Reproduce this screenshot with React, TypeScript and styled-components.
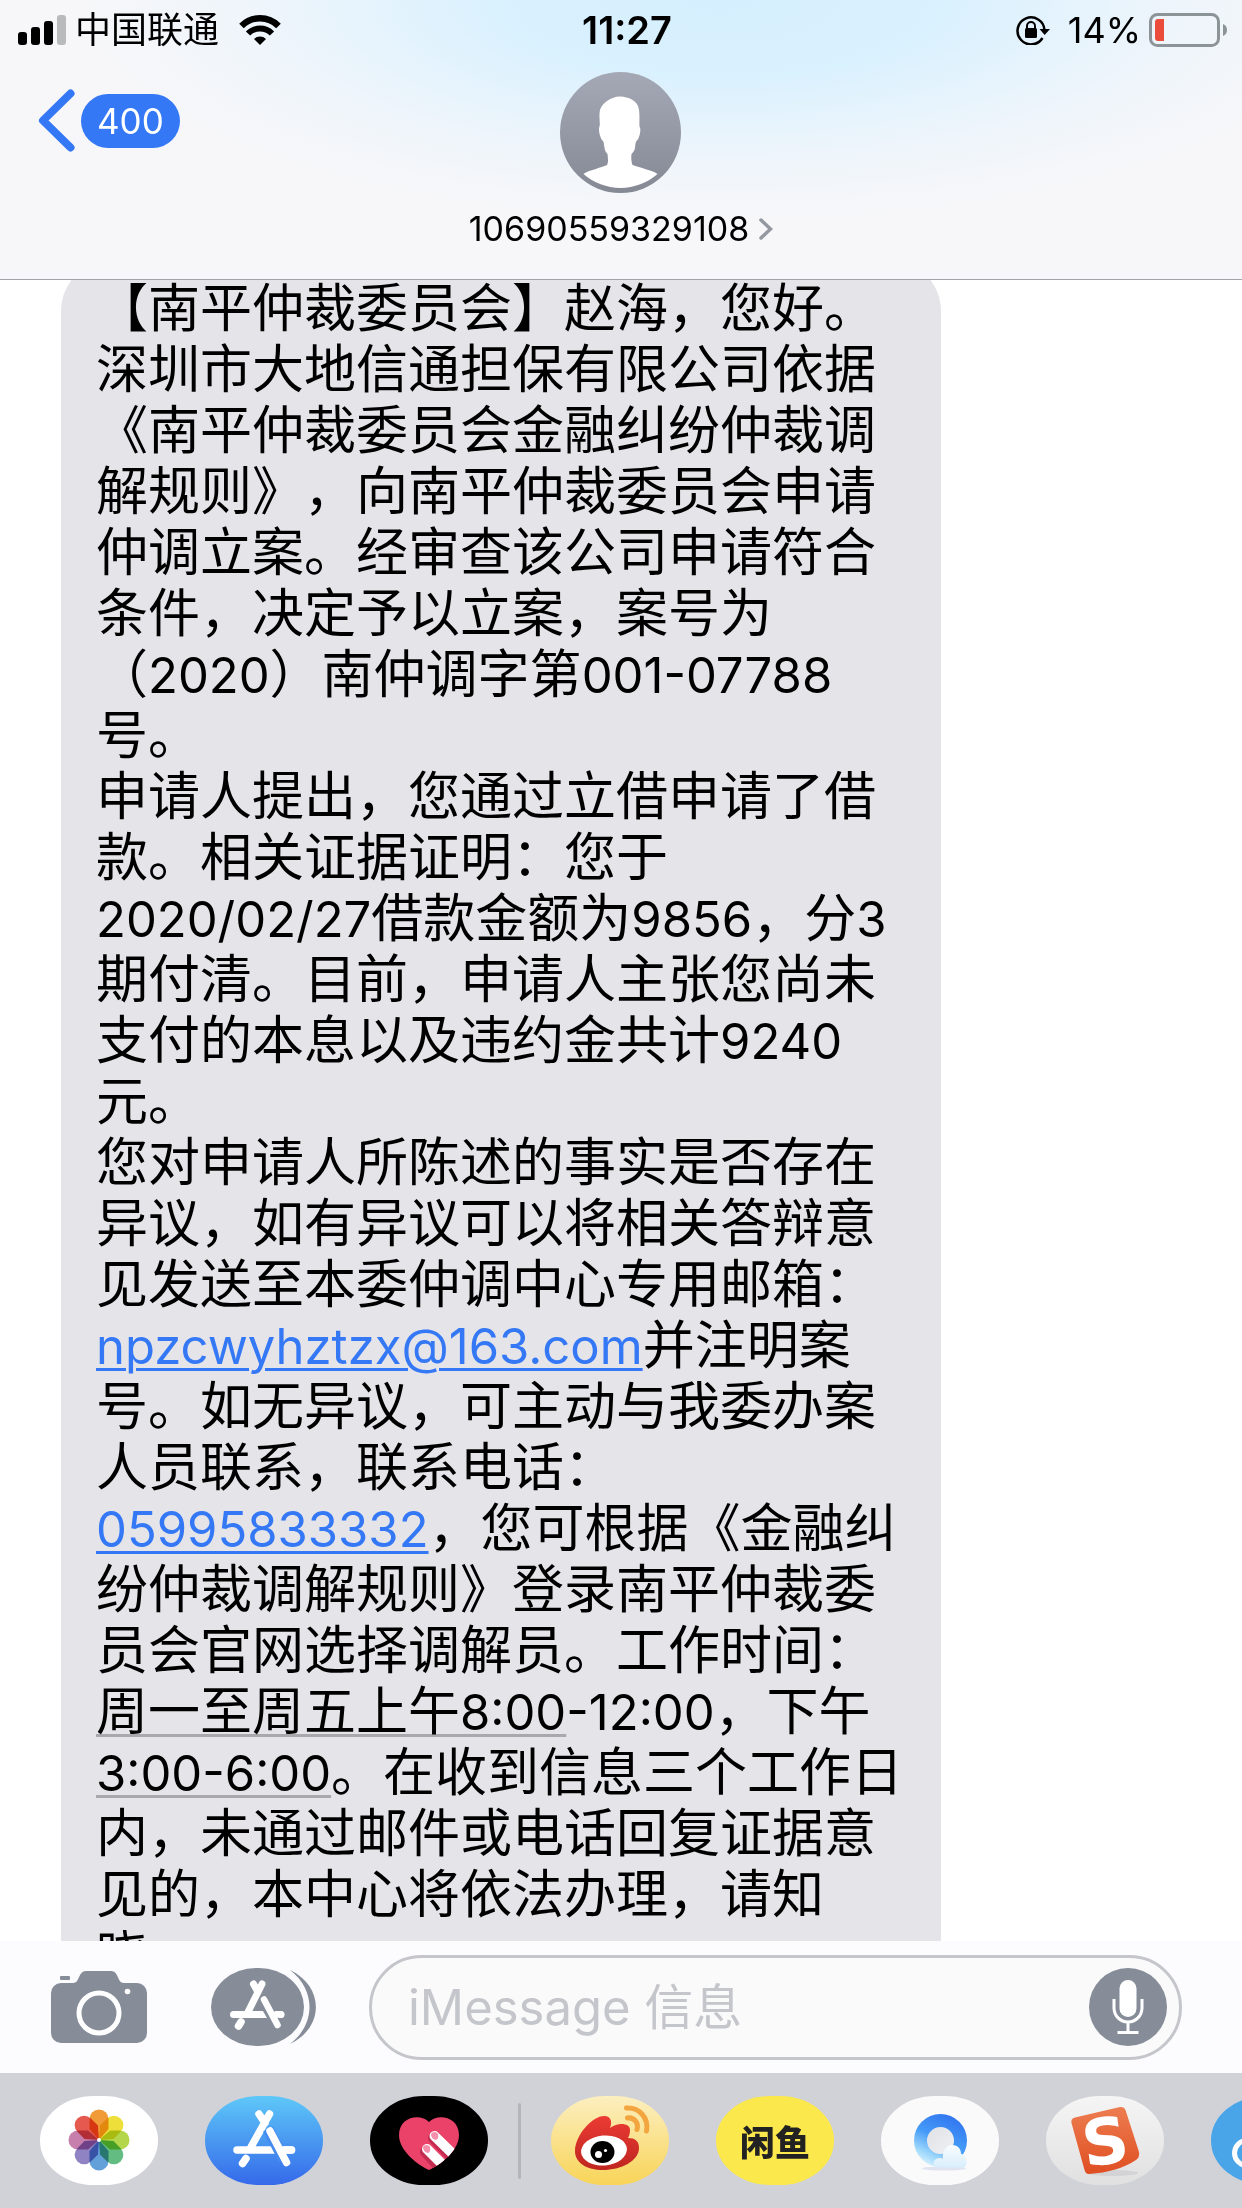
import React from "react";
import styled, { createGlobalStyle } from "styled-components";

const fontStack = `Inter, "Noto Sans CJK SC", sans-serif`;

const color = {
  link: "#3478f6",
  bubble: "#e5e4e9",
  icon: "#868d99",
  drawer: "#d1d2d8",
  border: "#c5c6cb",
};

const GlobalStyle = createGlobalStyle`
  *, *::before, *::after { box-sizing: border-box; }
  body {
    margin: 0;
    background: #fff;
    color: #000;
    font-family: ${fontStack};
  }
  button {
    padding: 0;
    border: 0;
    background: none;
    color: inherit;
    font: inherit;
    cursor: pointer;
  }
  svg { display: block; flex: none; }
`;

const Screen = styled.div`
  display: flex;
  flex-direction: column;
  height: 100vh;
  overflow: hidden;
`;

const Header = styled.header`
  flex: none;
  z-index: 1;
  border-bottom: 1px solid #a3a4a8;
  background:
    radial-gradient(ellipse 52% 80% at 58% 0, #d5effe 0, #daf1fe 35%, rgba(234, 244, 252, 0.7) 70%, rgba(247, 248, 250, 0) 100%),
    #f7f7f9;
`;

const StatusBar = styled.div`
  display: grid;
  grid-template-columns: 1fr auto 1fr;
  align-items: center;
  height: 60px;
  padding: 0 6px 0 18px;
  font-size: 36px;
  line-height: 60px;
`;

const StatusGroup = styled.div<{ $end?: boolean }>`
  display: flex;
  align-items: center;
  justify-content: ${(p) => (p.$end ? "flex-end" : "flex-start")};
  gap: 8px;
  padding-right: ${(p) => (p.$end ? "8px" : "0")};
`;

const Carrier = styled.span`
  margin-right: 12px;
`;

const Percent = styled.span`
  margin-left: 10px;
`;

const Clock = styled.time`
  font-size: 38px;
  font-weight: 600;
`;

const NavBar = styled.nav`
  display: grid;
  grid-template-columns: 1fr auto 1fr;
  align-items: start;
  height: 219px;
  padding: 12px 38px 0;
`;

const BackButton = styled.button`
  display: flex;
  align-items: center;
  justify-self: start;
  gap: 6px;
  margin-top: 17px;
`;

const UnreadPill = styled.span`
  padding: 0 16px;
  border-radius: 27px;
  background: ${color.link};
  color: #fff;
  font-size: 35px;
  line-height: 54px;
`;

const Contact = styled.button`
  display: flex;
  flex-direction: column;
  align-items: center;
  gap: 12px;
`;

const ContactName = styled.span`
  display: flex;
  align-items: center;
  gap: 10px;
  font-size: 34px;
  line-height: 48px;
`;

const Thread = styled.main`
  flex: 1;
  min-height: 0;
  overflow: hidden;
  padding: 0 61px;
`;

const Bubble = styled.article`
  width: 880px;
  max-width: 100%;
  margin-top: -20px;
  padding: 18px 34px 18px 35px;
  border-radius: 51px;
  background: ${color.bubble};
  font-size: 52px;
  line-height: 61px;
  text-spacing-trim: space-all;
`;

const Paragraph = styled.p`
  margin: 0;
`;

const Latin = styled.span`
  font-size: 49px;
  line-height: 49px;
`;

const MessageLink = styled.a`
  color: ${color.link};
  font-size: 49px;
  line-height: 49px;
  text-decoration: underline 3px;
  text-underline-offset: 4px;
`;

const DetectedTime = styled.span`
  text-decoration: underline 3px #a9a9ad;
  text-underline-offset: 4px;
`;

const Composer = styled.form`
  display: flex;
  flex: none;
  align-items: center;
  height: 132px;
  padding: 0 60px 0 51px;
  background: #fcfcfe;
`;

const CameraButton = styled.button`
  margin-right: 64px;
`;

const AppsButton = styled.button`
  margin-right: 53px;
`;

const InputPill = styled.div`
  display: flex;
  flex: 1;
  align-items: center;
  min-width: 0;
  height: 105px;
  padding: 0 12px 0 36px;
  border: 3px solid ${color.border};
  border-radius: 53px;
  background: #fafafa;
`;

const MessageInput = styled.input`
  flex: 1;
  min-width: 0;
  height: 80px;
  padding: 0;
  border: 0;
  outline: 0;
  background: none;
  font-family: ${fontStack};
  font-size: 49px;
  &::placeholder { color: #c5c6cb; opacity: 1; }
`;

const Drawer = styled.div`
  display: flex;
  flex: none;
  align-items: center;
  gap: 47px;
  height: 135px;
  overflow: hidden;
  padding: 0 0 0 40px;
  background: ${color.drawer};
`;

const AppIcon = styled.button<{ $bg: string }>`
  display: flex;
  flex: none;
  align-items: center;
  justify-content: center;
  width: 118px;
  height: 89px;
  overflow: hidden;
  border-radius: 54px / 44px;
  background: ${(p) => p.$bg};
`;

const Divider = styled.span`
  flex: none;
  width: 3px;
  height: 76px;
  margin: 0 -17px;
  border-radius: 2px;
  background: #b4b5ba;
`;

const Wordmark = styled.span`
  color: #222;
  font-family: "Noto Sans CJK SC", sans-serif;
  font-size: 35px;
  font-weight: 900;
  line-height: 40px;
`;

/* Sets runs of digits and Latin letters a step smaller than the Chinese text around them. */
const Mixed = ({ children }: { children: string }) => (
  <>
    {children.split(/([0-9A-Za-z:\/-]+)/).map((run, i) => (i % 2 ? <Latin key={i}>{run}</Latin> : run))}
  </>
);

const SignalIcon = () => (
  <svg width="49" height="30" viewBox="0 0 49 30" aria-hidden="true">
    <rect x="0" y="17" width="9" height="13" rx="3" />
    <rect x="13" y="12" width="9" height="18" rx="3" />
    <rect x="26" y="6" width="9" height="24" rx="3" />
    <rect x="39" y="0" width="9" height="30" rx="3" fill="#b9babb" />
  </svg>
);

const WifiIcon = () => (
  <svg width="42" height="30" viewBox="0 0 42 30" aria-hidden="true">
    <path d="M2.500 11 A26 26 0 0 1 39.500 11" fill="none" stroke="#000" strokeWidth="6.500" />
    <path d="M9 18.500 A17 17 0 0 1 33 18.500" fill="none" stroke="#000" strokeWidth="6" />
    <path d="M15 24 A8.500 8.500 0 0 1 27 24 L21 30 Z" />
  </svg>
);

const RotationLockIcon = () => (
  <svg width="34" height="30" viewBox="0 0 34 30" aria-hidden="true">
    <path d="M26.500 23 A13.500 13.500 0 1 1 28.500 15" fill="none" stroke="#000" strokeWidth="2.500" />
    <path d="M23.500 14 H34 L28.700 20 Z" />
    <rect x="9" y="13" width="12" height="10" rx="1.500" />
    <path d="M11 14 V11 a4 4 0 0 1 8 0 V14" fill="none" stroke="#000" strokeWidth="2" />
  </svg>
);

const BatteryIcon = () => (
  <svg width="79" height="34" viewBox="0 0 79 34" aria-hidden="true">
    <rect x="1.500" y="1.500" width="68" height="31" rx="7" fill="none" stroke="#8c9498" strokeWidth="3" />
    <path d="M9 6 H15 V28 H9 a3 3 0 0 1 -3 -3 V9 a3 3 0 0 1 3 -3 Z" fill="#eb4d3d" />
    <path d="M74 11 a6.500 6.500 0 0 1 0 12 Z" fill="#8c9498" />
  </svg>
);

const BackChevron = () => (
  <svg width="37" height="63" viewBox="0 0 37 63" aria-hidden="true">
    <path d="M32.500 4.500 L5 31.500 L32.500 58.500" fill="none" stroke={color.link} strokeWidth="8" strokeLinecap="round" strokeLinejoin="round" />
  </svg>
);

const AvatarIcon = () => (
  <svg width="121" height="121" viewBox="0 0 121 121" aria-hidden="true">
    <defs>
      <linearGradient id="avatarFill" x1="0" y1="0" x2="0" y2="1">
        <stop offset="0" stopColor="#a5a9b6" />
        <stop offset="1" stopColor="#858994" />
      </linearGradient>
    </defs>
    <circle cx="60.500" cy="60.500" r="60.500" fill="url(#avatarFill)" />
    <path
      fill="#fff"
      d="M60.500 24.500 C68 25 78 28 79 38 C80 45 79 50 79.500 54.500 C81.500 57 79.500 66 77 68.500 C76 69 75.500 71 75 76 C74.500 79 73 80 71.500 82 C71 87 71.500 90 72.500 93 C80 96 92 98 97.500 102 A56 56 0 0 1 23.500 102 C29 98 41 96 47 93 C48.500 90 48 87 47.500 82 C46 80 45 79 44.500 76 C44 71 43.500 69 42.500 68.500 C40 66 38 57 39.500 54.500 C40.500 50 38.500 45 40 38 C42 31 52 24 60.500 24.500 Z"
    />
  </svg>
);

const DetailChevron = () => (
  <svg width="14" height="24" viewBox="0 0 14 24" aria-hidden="true">
    <path d="M2 3 L11.500 12 L2 21" fill="none" stroke="#9498a0" strokeWidth="3.500" strokeLinecap="round" />
  </svg>
);

const CameraIcon = () => (
  <svg width="96" height="72" viewBox="0 0 96 72" aria-hidden="true" fill={color.icon}>
    <rect x="9" y="5" width="10" height="4" rx="1" />
    <path d="M10 12 H22 C29 12 27 0 35 0 H60 C68 0 66 12 73 12 H86 a10 10 0 0 1 10 10 V62 a10 10 0 0 1 -10 10 H10 a10 10 0 0 1 -10 -10 V22 a10 10 0 0 1 10 -10 Z" />
    <circle cx="48" cy="42" r="20" fill="none" stroke="#fff" strokeWidth="5" />
    <circle cx="76.500" cy="20.500" r="2.800" fill="#fff" />
  </svg>
);

const AppsIcon = () => (
  <svg width="105" height="78" viewBox="0 0 105 78" aria-hidden="true">
    <rect width="93" height="78" rx="45" ry="39" fill={color.icon} />
    <path d="M79 2 C113 18 114 59 79 76 C105 56 105 22 79 2 Z" fill={color.icon} />
    <g fill="none" strokeLinecap="round">
      <path d="M51 16 L36 46 M42.500 16 L47 24 M22.500 46.500 H70" stroke="#fff" strokeWidth="7" />
      <path d="M30 54 L27.500 58" stroke="#fff" strokeWidth="7.500" />
      <path d="M51 31 L66 57" stroke={color.icon} strokeWidth="10.500" strokeLinecap="butt" />
      <path d="M65 46.500 H70 M53 31.500 L66.500 57" stroke="#fff" strokeWidth="6.500" />
    </g>
  </svg>
);

const MicIcon = () => (
  <svg width="78" height="78" viewBox="0 0 78 78" aria-hidden="true">
    <circle cx="39" cy="39" r="39" fill={color.icon} />
    <rect x="30.500" y="12" width="17" height="37" rx="8.500" fill="#fff" />
    <path d="M25 31 V40 a14 14 0 0 0 28 0 V31 M39 54 V65 M28.500 64.500 H49.500" fill="none" stroke="#fff" strokeWidth="3" />
  </svg>
);

const petals = ["#f09b38", "#efdf3a", "#b4d64a", "#63bd83", "#63a0da", "#8f83c4", "#c77fae", "#e5594f"];

const PhotosIcon = () => (
  <svg width="118" height="89" viewBox="0 0 118 89" aria-hidden="true">
    {petals.map((fill, i) => (
      <path
        key={fill}
        d="M0 0 L-9.500 -11 V-21 a9.500 9.500 0 0 1 19 0 V-11 Z"
        fill={fill}
        transform={`translate(59 44) rotate(${i * 45})`}
        style={{ mixBlendMode: "multiply" }}
      />
    ))}
    <circle cx="59" cy="44" r="2" fill="#fff" />
  </svg>
);

const StoreIcon = () => (
  <svg width="118" height="89" viewBox="0 0 118 89" aria-hidden="true" fill="none" strokeLinecap="round">
    <path d="M64.500 18 L46 51 M54 18 L60 27 M32 54 H86.500" stroke="#fff" strokeWidth="7.500" />
    <path d="M41 62.500 L37.500 67.500" stroke="#fff" strokeWidth="7.500" />
    <path d="M63 33 L79 64" stroke="#458bef" strokeWidth="11" strokeLinecap="butt" />
    <path d="M79 54 H86.500 M65 35 L81.500 66.500" stroke="#fff" strokeWidth="7.500" />
  </svg>
);

const HeartIcon = () => (
  <svg width="118" height="89" viewBox="0 0 118 89" aria-hidden="true">
    <defs>
      <clipPath id="heartShape">
        <path d="M59 26 C67 17 89 20 89 39 C89 55 70 69 59 74 C48 69 29 55 29 39 C29 20 51 17 59 26 Z" />
      </clipPath>
    </defs>
    <g clipPath="url(#heartShape)">
      <rect x="25" y="15" width="70" height="62" fill="#eb426a" />
      <g strokeLinecap="round">
        <path d="M55 56 L75 78" stroke="#c22c50" strokeWidth="10" />
        <path d="M64 42 L90 68" stroke="#c22c50" strokeWidth="12" />
        <path d="M57 53 L80 76" stroke="#fff" strokeWidth="10" />
        <path d="M64.500 40 L92 67" stroke="#fff" strokeWidth="10" />
      </g>
      <path d="M53 51 a4 4 0 0 1 7 0 q1 5 -2 6 q-5 -1 -5 -6 Z M61 38 a4 4 0 0 1 7 0 q1 5 -2 6 q-5 -1 -5 -6 Z" fill="#f48fae" />
    </g>
  </svg>
);

const WeiboIcon = () => (
  <svg width="118" height="89" viewBox="0 0 118 89" aria-hidden="true">
    <defs>
      <linearGradient id="weiboRed" x1="0" y1="0" x2="0" y2="1">
        <stop offset="0" stopColor="#eb3b34" />
        <stop offset="1" stopColor="#bf2520" />
      </linearGradient>
    </defs>
    <path
      d="M24 55 C24 39 42 19 54 20 C61 21 61 27 59 32 C67 26 79 27 79 34 C79 38 78 40 77 42 C84 42 88 45 88 52 C88 65 70 74 52 74 C36 74 24 67 24 55 Z"
      fill="url(#weiboRed)"
    />
    <ellipse cx="53" cy="54.500" rx="23" ry="15" fill="#fff" transform="rotate(-5 53 54.500)" />
    <ellipse cx="51.500" cy="56" rx="12" ry="11" />
    <circle cx="47.500" cy="58.500" r="3.500" fill="#fff" />
    <circle cx="54.500" cy="54.500" r="1.600" fill="#fff" />
    <path d="M75.500 12 C88 11 98 22 95.500 35 M76.500 22 C83 21 88 27 86 33.500" fill="none" stroke="#f3a53f" strokeWidth="5" strokeLinecap="round" />
  </svg>
);

const BrowserIcon = () => (
  <svg width="118" height="89" viewBox="0 0 118 89" aria-hidden="true">
    <defs>
      <linearGradient id="ringFill" x1="0.750" y1="0.100" x2="0.300" y2="1">
        <stop offset="0" stopColor="#3379f0" />
        <stop offset="0.450" stopColor="#459bf8" />
        <stop offset="0.800" stopColor="#9fd8fb" />
        <stop offset="1" stopColor="#d9f1fd" />
      </linearGradient>
      <linearGradient id="coreFill" x1="0" y1="0" x2="1" y2="1">
        <stop offset="0" stopColor="#dcdee3" />
        <stop offset="1" stopColor="#f3f4f6" />
      </linearGradient>
      <linearGradient id="cloudFill" x1="0" y1="0" x2="0" y2="1">
        <stop offset="0" stopColor="#fafdff" />
        <stop offset="1" stopColor="#d8eefb" />
      </linearGradient>
    </defs>
    <ellipse cx="63" cy="72.500" rx="22" ry="2" fill="#dfe4f0" />
    <circle cx="59.500" cy="45" r="20" fill="url(#coreFill)" />
    <path fillRule="evenodd" d="M59.500 18 a26.500 26.500 0 1 1 0 53 a26.500 26.500 0 1 1 0 -53 Z M59.500 31 a13.500 13.500 0 1 0 0 27 a13.500 13.500 0 1 0 0 -27 Z" fill="url(#ringFill)" />
    <path d="M57 71.500 C50 70 52 62 59 62 C60 62 61 62 62 63 C61 54 66 49 71 49 C77 49 80 53 80 58 C87 59 87 71 83 71.500 Z" fill="url(#cloudFill)" />
  </svg>
);

const InputMethodIcon = () => (
  <svg width="118" height="89" viewBox="0 0 118 89" aria-hidden="true">
    <defs>
      <linearGradient id="tileFill" x1="0" y1="0" x2="0" y2="1">
        <stop offset="0" stopColor="#ed7d50" />
        <stop offset="1" stopColor="#df4f22" />
      </linearGradient>
    </defs>
    <ellipse cx="66" cy="77" rx="26" ry="3" fill="#d3d3d5" />
    <path d="M29 21.500 L74 11 Q78 10.500 79.500 14 L93 56 Q94 61 90 64 Q72 76 43 78 Q39.500 78 38.500 74 L25.500 27 Q24.500 22.500 29 21.500 Z" fill="url(#tileFill)" />
    <text x="59" y="68" fill="#fff" fontFamily="DejaVu Sans, sans-serif" fontSize="64" fontWeight="700" textAnchor="middle" transform="rotate(-8 59 45)">
      S
    </text>
  </svg>
);

const LinkAppIcon = () => (
  <svg width="118" height="89" viewBox="0 0 118 89" aria-hidden="true">
    <circle cx="36" cy="57" r="12.500" fill="none" stroke="#fff" strokeWidth="5" />
  </svg>
);

export default function App() {
  return (
    <>
      <GlobalStyle />
      <Screen>
        <Header>
          <StatusBar>
            <StatusGroup>
              <SignalIcon />
              <Carrier>中国联通</Carrier>
              <WifiIcon />
            </StatusGroup>
            <Clock>11:27</Clock>
            <StatusGroup $end>
              <RotationLockIcon />
              <Percent>14%</Percent>
              <BatteryIcon />
            </StatusGroup>
          </StatusBar>
          <NavBar>
            <BackButton type="button">
              <BackChevron />
              <UnreadPill>400</UnreadPill>
            </BackButton>
            <Contact type="button">
              <AvatarIcon />
              <ContactName>
                10690559329108
                <DetailChevron />
              </ContactName>
            </Contact>
          </NavBar>
        </Header>

        <Thread>
          <Bubble>
            <Paragraph>
              【南平仲裁委员会】赵海，您好。
              <br />
              <Mixed>深圳市大地信通担保有限公司依据《南平仲裁委员会金融纠纷仲裁调解规则》，向南平仲裁委员会申请仲调立案。经审查该公司申请符合条件，决定予以立案，案号为（2020）南仲调字第001-07788号。</Mixed>
            </Paragraph>
            <Paragraph>
              <Mixed>申请人提出，您通过立借申请了借款。相关证据证明：您于2020/02/27借款金额为9856，分3期付清。目前，申请人主张您尚未支付的本息以及违约金共计9240元。</Mixed>
            </Paragraph>
            <Paragraph>
              您对申请人所陈述的事实是否存在异议，如有异议可以将相关答辩意见发送至本委仲调中心专用邮箱：
              <MessageLink href="mailto:npzcwyhztzx@163.com">npzcwyhztzx@163.com</MessageLink>
              并注明案号。如无异议，可主动与我委办案人员联系，联系电话：
              <MessageLink href="tel:05995833332">05995833332</MessageLink>
              ，您可根据《金融纠纷仲裁调解规则》登录南平仲裁委员会官网选择调解员。工作时间：
              <DetectedTime>
                <Mixed>周一至周五上午8:00</Mixed>
              </DetectedTime>
              <Mixed>-12:00，下午</Mixed>
              <DetectedTime>
                <Mixed>3:00-6:00</Mixed>
              </DetectedTime>
              。在收到信息三个工作日内，未通过邮件或电话回复证据意见的，本中心将依法办理，请知晓。
            </Paragraph>
          </Bubble>
        </Thread>

        <Composer onSubmit={(e) => e.preventDefault()}>
          <CameraButton type="button" aria-label="相机">
            <CameraIcon />
          </CameraButton>
          <AppsButton type="button" aria-label="App">
            <AppsIcon />
          </AppsButton>
          <InputPill>
            <MessageInput type="text" aria-label="信息" placeholder="iMessage 信息" />
            <button type="button" aria-label="录音">
              <MicIcon />
            </button>
          </InputPill>
        </Composer>

        <Drawer>
          <AppIcon type="button" aria-label="照片" $bg="#fff">
            <PhotosIcon />
          </AppIcon>
          <AppIcon type="button" aria-label="App Store" $bg="linear-gradient(#5ec8f8, #3569ea)">
            <StoreIcon />
          </AppIcon>
          <AppIcon type="button" aria-label="Digital Touch" $bg="#000">
            <HeartIcon />
          </AppIcon>
          <Divider />
          <AppIcon type="button" aria-label="微博" $bg="linear-gradient(#fcefc0, #f8d458)">
            <WeiboIcon />
          </AppIcon>
          <AppIcon type="button" $bg="#fbe84c">
            <Wordmark>闲鱼</Wordmark>
          </AppIcon>
          <AppIcon type="button" aria-label="QQ浏览器" $bg="#fafafa">
            <BrowserIcon />
          </AppIcon>
          <AppIcon type="button" aria-label="搜狗输入法" $bg="linear-gradient(#f5f5f5, #e0e0e1)">
            <InputMethodIcon />
          </AppIcon>
          <AppIcon type="button" aria-label="更多" $bg="#4aa5e8">
            <LinkAppIcon />
          </AppIcon>
        </Drawer>
      </Screen>
    </>
  );
}
